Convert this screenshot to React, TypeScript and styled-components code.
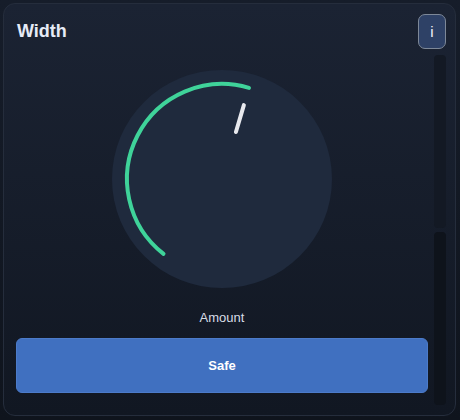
import React from 'react';
import styled, { createGlobalStyle } from 'styled-components';

const GlobalStyle = createGlobalStyle`
  html, body {
    margin: 0;
    padding: 0;
    background: linear-gradient(180deg, #161d2a 0%, #0f141d 100%);
    min-height: 420px;
  }
  body {
    font-family: 'Liberation Sans', Arial, sans-serif;
  }
`;

const Page = styled.div`
  padding: 3px 4px 4px 3px;
  width: 460px;
  height: 420px;
  box-sizing: border-box;
`;

const Card = styled.div`
  box-sizing: border-box;
  height: 413px;
  border: 1px solid #252d3c;
  border-radius: 12px;
  background: linear-gradient(180deg, #1b2333 0%, #111722 100%);
  padding: 10px 9px 10px 12px;
  display: flex;
  flex-direction: column;
  gap: 6px;
`;

const Header = styled.div`
  display: flex;
  align-items: center;
  justify-content: space-between;
  height: 35px;
`;

const Title = styled.h2`
  margin: 0 0 0 1px;
  font-size: 18px;
  font-weight: 700;
  color: #e6ebf7;
`;

const InfoButton = styled.button`
  box-sizing: border-box;
  width: 28px;
  height: 35px;
  border: 1px solid #7d8898;
  border-radius: 7px;
  background: #2e4166;
  color: #eef2f8;
  font-family: 'Liberation Sans', Arial, sans-serif;
  font-size: 15px;
  padding: 0;
  cursor: pointer;
`;

const Body = styled.div`
  flex: 1;
  display: flex;
  gap: 6px;
  min-height: 0;
`;

const Main = styled.div`
  flex: 1;
  display: flex;
  flex-direction: column;
  align-items: center;
  padding-top: 15px;
`;

const KnobWrap = styled.div`
  width: 220px;
  height: 218px;
`;

const Label = styled.div`
  margin-top: 22px;
  font-size: 13px;
  color: #d8dde7;
  line-height: 16px;
`;

const ActionButton = styled.button`
  box-sizing: border-box;
  margin-top: 12px;
  width: 100%;
  height: 55px;
  border: 1px solid #4c7bc9;
  border-radius: 6px;
  background: #4070c0;
  color: #ffffff;
  font-family: 'Liberation Sans', Arial, sans-serif;
  font-size: 13px;
  font-weight: 700;
  cursor: pointer;
`;

const Meter = styled.div`
  width: 12px;
  display: flex;
  flex-direction: column;
  gap: 4px;
`;

const MeterSegment = styled.div<{ $shade: string }>`
  flex: 1;
  border-radius: 4px;
  background: ${({ $shade }) => $shade};
`;

const polar = (cx: number, cy: number, r: number, deg: number) => {
  const rad = (deg * Math.PI) / 180;
  return { x: cx + r * Math.sin(rad), y: cy - r * Math.cos(rad) };
};

const Knob = ({ from, to }: { from: number; to: number }) => {
  const cx = 110;
  const cy = 109;
  const r = 95;
  const a = polar(cx, cy, r, from);
  const b = polar(cx, cy, r, to);
  const large = to - from > 180 ? 1 : 0;
  const p1 = polar(cx, cy, 49, to);
  const p2 = polar(cx, cy, 77, to);

  return (
    <svg width="220" height="218" viewBox="0 0 220 218">
      <ellipse cx={cx} cy={cy} rx="110" ry="109" fill="#1f2a3d" />
      <path
        d={`M ${a.x} ${a.y} A ${r} ${r} 0 ${large} 1 ${b.x} ${b.y}`}
        fill="none"
        stroke="#3fd39a"
        strokeWidth="4"
        strokeLinecap="round"
      />
      <line
        x1={p1.x}
        y1={p1.y}
        x2={p2.x}
        y2={p2.y}
        stroke="#e8e9ee"
        strokeWidth="4"
        strokeLinecap="round"
      />
    </svg>
  );
};

export default function App() {
  return (
    <>
      <GlobalStyle />
      <Page>
        <Card>
          <Header>
            <Title>Width</Title>
            <InfoButton type="button">i</InfoButton>
          </Header>
          <Body>
            <Main>
              <KnobWrap>
                <Knob from={-142} to={16.5} />
              </KnobWrap>
              <Label>Amount</Label>
              <ActionButton type="button">Safe</ActionButton>
            </Main>
            <Meter>
              <MeterSegment $shade="#131924" />
              <MeterSegment $shade="#0e131b" />
            </Meter>
          </Body>
        </Card>
      </Page>
    </>
  );
}
